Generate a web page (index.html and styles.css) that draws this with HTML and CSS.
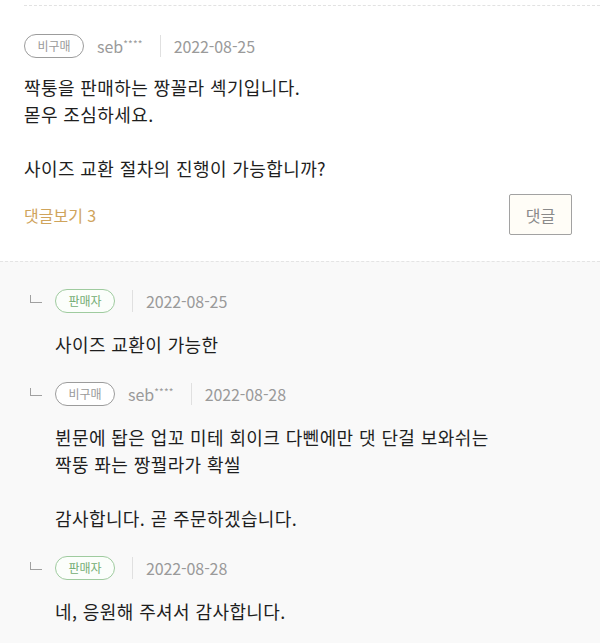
FILE: index.html
```html
<!DOCTYPE html>
<html lang="ko">
<head>
<meta charset="utf-8">
<link rel="stylesheet" href="styles.css">
</head>
<body>
<div class="page">
  <section class="comment">
    <div class="meta">
      <span class="badge badge-buyer">비구매</span>
      <span class="user">seb<span class="mask">****</span></span>
      <span class="sep"></span>
      <span class="date">2022-08-25</span>
    </div>
    <p class="text">짝퉁을 판매하는 짱꼴라 셱기입니다.<br>몯우 조심하세요.<br><br>사이즈 교환 절차의 진행이 가능합니까?</p>
    <div class="actions">
      <span class="more">댓글보기 3</span>
      <button class="reply-btn">댓글</button>
    </div>
  </section>
  <section class="replies">
    <div class="reply">
      <div class="meta">
        <span class="corner"></span>
        <span class="badge badge-seller">판매자</span>
        <span class="sep"></span>
        <span class="date">2022-08-25</span>
      </div>
      <p class="text">사이즈 교환이 가능한</p>
    </div>
    <div class="reply">
      <div class="meta">
        <span class="corner"></span>
        <span class="badge badge-buyer">비구매</span>
        <span class="user">seb<span class="mask">****</span></span>
        <span class="sep"></span>
        <span class="date">2022-08-28</span>
      </div>
      <p class="text">뷘문에 돱은 업꼬 미테 회이크 다뻰에만 댓 단걸 보와쉬는<br>짝뚱 퐈는 짱꿜라가 확씰<br><br>감사합니다. 곧 주문하겠습니다.</p>
    </div>
    <div class="reply">
      <div class="meta">
        <span class="corner"></span>
        <span class="badge badge-seller">판매자</span>
        <span class="sep"></span>
        <span class="date">2022-08-28</span>
      </div>
      <p class="text">네, 응원해 주셔서 감사합니다.</p>
    </div>
  </section>
</div>
</body>
</html>
```

FILE: styles.css
```css
* { box-sizing: border-box; }
html, body { margin: 0; padding: 0; }
body {
  background: #ffffff;
  font-family: "Noto Sans CJK KR", "Noto Sans", sans-serif;
  color: #1e1e1e;
  width: 600px;
  height: 643px;
  overflow: hidden;
}
.page { padding-top: 5px; }

.comment {
  margin-left: 24px;
  border-top: 1px dashed #e2e2e2;
  padding: 28px 28px 26px 0;
}
.meta {
  display: flex;
  align-items: center;
  height: 24px;
}
.badge {
  display: inline-flex;
  align-items: center;
  justify-content: center;
  height: 24px;
  width: 60px;
  border-radius: 12px;
  font-size: 12px;
  line-height: 1;
  background: #fff;
}
.badge-buyer { border: 1.5px solid #9c9c9c; color: #9a9a9a; }
.badge-seller { border: 1.5px solid #9fcb9f; color: #73ad73; background: #fbfefb; }
.user {
  margin-left: 13px;
  font-size: 16px;
  color: #9a9a9a;
}
.mask {
  font-size: 10px;
  vertical-align: 5px;
  letter-spacing: 0.2px;
}
.sep {
  width: 1px;
  height: 22px;
  background: #e0e0e0;
  margin: 0 13px 0 17px;
}
.date {
  font-size: 16px;
  color: #9a9a9a;
  letter-spacing: -0.1px;
}
.text {
  margin: 16px 0 0 0;
  font-size: 18px;
  line-height: 27px;
  color: #1e1e1e;
  letter-spacing: 0.4px;
}
.actions {
  margin-top: 12px;
  display: flex;
  align-items: center;
  justify-content: space-between;
}
.more {
  font-size: 16px;
  color: #cfa45c;
}
.reply-btn {
  width: 63px;
  height: 41px;
  border: 1.5px solid #a2a2a2;
  border-radius: 2px;
  background: #fffdf7;
  color: #8a8a8a;
  font-family: inherit;
  font-size: 16px;
  padding: 0;
}

.replies {
  border-top: 1px dashed #e4e4e4;
  background: #f9f9f9;
  padding: 27px 0 0 30px;
  min-height: 400px;
}
.reply + .reply { margin-top: 24px; }
.corner {
  width: 12px;
  height: 8px;
  border-left: 1.5px solid #a0a0a0;
  border-bottom: 1.5px solid #a0a0a0;
  margin: -4px 13px 0 0;
}
.reply .text {
  margin: 18px 0 0 25px;
}
```
